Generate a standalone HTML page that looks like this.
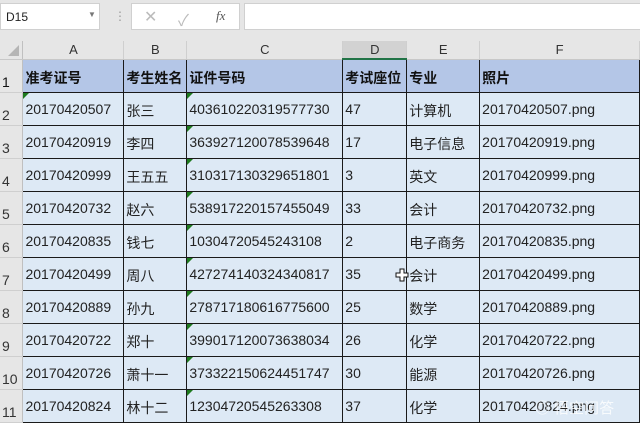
<!DOCTYPE html><html><head><meta charset="utf-8"><style>
*{margin:0;padding:0;box-sizing:border-box}
body{width:640px;height:423px;overflow:hidden;background:#e6e6e6;font-family:"Liberation Sans","Noto Sans CJK SC",sans-serif;position:relative}
.a{position:absolute}
table{position:absolute;left:0;top:41px;border-collapse:collapse;table-layout:fixed}
td{height:33px;font-size:14px;color:#222;border:1px solid #1a1a1a;background:#dde9f5;padding:8px 0 0 2px;white-space:nowrap;overflow:hidden;position:relative;vertical-align:top}
tr.h td{height:18px;background:#e6e6e6;border:none;border-right:1px solid #cfcfcf;border-bottom:1px solid #c8c8c8;text-align:center;font-size:13px;color:#333;padding:1px 0 0}
td.r{background:#e6e6e6;border:none;border-bottom:1px solid #cfcfcf;border-right:1px solid #c0c0c0;font-size:14px;color:#333;padding:14px 0 0 2px}
tr.t td{background:#b4c6e7;font-weight:bold;color:#111}
tr.t td.r{background:#e6e6e6;font-weight:normal}
.g::before{content:"";position:absolute;left:0;top:0;border-top:6px solid #1e7a1e;border-right:6px solid transparent}
</style></head><body>
<div class="a" style="left:0;top:3px;width:100px;height:27px;background:#fff;border:1px solid #d0d0d0;font-size:12px;padding:6px 0 0 5px;color:#222">D15<span style="position:absolute;left:87px;top:6px;font-size:8px;color:#777">▼</span></div>
<div class="a" style="left:114px;top:9px;color:#999;font-size:12px">⋮</div>
<div class="a" style="left:131px;top:3px;width:109px;height:27px;background:#fff;border:1px solid #d0d0d0"><span class="a" style="left:12px;top:3px;color:#bbb;font-size:16px">✕</span><span class="a" style="left:46px;top:3px;color:#bbb;font-size:16px">✓</span><span class="a" style="left:84px;top:4px;color:#555;font-size:13px;font-style:italic;font-family:'Liberation Serif',serif">fx</span></div>
<div class="a" style="left:244px;top:3px;width:400px;height:27px;background:#fff;border:1px solid #d0d0d0"></div>
<div class="a" style="left:0;top:35px;width:640px;height:6px;background:#e6e6e6"></div>
<table>
<colgroup><col style="width:23px"><col style="width:101px"><col style="width:63px"><col style="width:156px"><col style="width:64px"><col style="width:73px"><col style="width:160px"></colgroup>
<tr class="h"><td style="border-right:1px solid #c0c0c0"><span style="position:absolute;left:8px;top:4px;border-bottom:11px solid #b5b5b5;border-left:11px solid transparent"></span></td><td>A</td><td>B</td><td>C</td><td style="background:#d2d2d2;border-bottom:2px solid #217346">D</td><td>E</td><td>F</td></tr>
<tr class="t"><td class="r">1</td><td>准考证号</td><td>考生姓名</td><td>证件号码</td><td>考试座位</td><td>专业</td><td>照片</td></tr>
<tr><td class="r">2</td><td class="g">20170420507</td><td>张三</td><td class="g">403610220319577730</td><td>47</td><td>计算机</td><td>20170420507.png</td></tr>
<tr><td class="r">3</td><td>20170420919</td><td>李四</td><td class="g">363927120078539648</td><td>17</td><td>电子信息</td><td>20170420919.png</td></tr>
<tr><td class="r">4</td><td>20170420999</td><td>王五五</td><td class="g">310317130329651801</td><td>3</td><td>英文</td><td>20170420999.png</td></tr>
<tr><td class="r">5</td><td>20170420732</td><td>赵六</td><td class="g">538917220157455049</td><td>33</td><td>会计</td><td>20170420732.png</td></tr>
<tr><td class="r">6</td><td>20170420835</td><td>钱七</td><td class="g">10304720545243108</td><td>2</td><td>电子商务</td><td>20170420835.png</td></tr>
<tr><td class="r">7</td><td>20170420499</td><td>周八</td><td class="g">427274140324340817</td><td>35</td><td>会计</td><td>20170420499.png</td></tr>
<tr><td class="r">8</td><td>20170420889</td><td>孙九</td><td class="g">278717180616775600</td><td>25</td><td>数学</td><td>20170420889.png</td></tr>
<tr><td class="r">9</td><td>20170420722</td><td>郑十</td><td class="g">399017120073638034</td><td>26</td><td>化学</td><td>20170420722.png</td></tr>
<tr><td class="r">10</td><td>20170420726</td><td>萧十一</td><td class="g">373322150624451747</td><td>30</td><td>能源</td><td>20170420726.png</td></tr>
<tr><td class="r">11</td><td>20170420824</td><td>林十二</td><td class="g">12304720545263308</td><td>37</td><td>化学</td><td>20170420824.png</td></tr>
</table>
<svg class="a" style="left:395px;top:268px" width="14" height="14" viewBox="0 0 14 14"><path d="M5 1h4v4h4v4h-4v4h-4v-4h-4v-4h4z" fill="#fff" stroke="#111" stroke-width="1"/></svg>
<div class="a" style="left:535px;top:397px;font-size:15px;color:rgba(255,255,255,.8)">◎ 悟空问答</div>
</body></html>
